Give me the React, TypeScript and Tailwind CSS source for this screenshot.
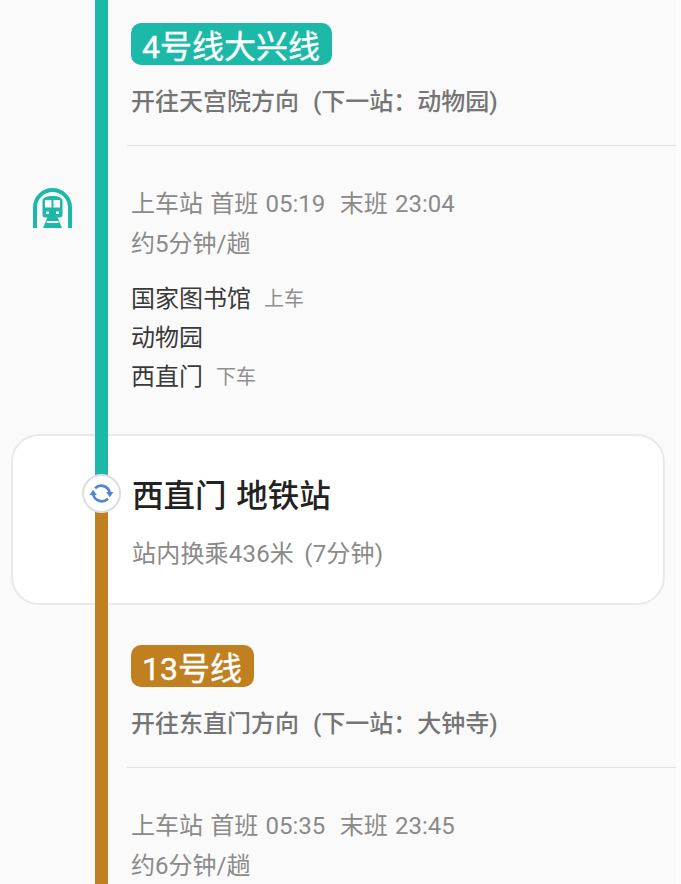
import React from 'react';

const TEAL = 'bg-[#1cb9a8]';
const BROWN = 'bg-[#c1801f]';

const MetroIcon = () => (
  <svg width="39" height="40" viewBox="0 0 39 40" fill="none">
    <path d="M2 40V19.500a17.500 17.500 0 0 1 35 0V40" stroke="#1cb9a8" strokeWidth="4" />
    <path d="M9.500 13c0-3.500 4-5 10-5s10 1.500 10 5v14c0 1.500-1 2.500-2.500 2.500H12c-1.500 0-2.500-1-2.500-2.500z" fill="#1cb9a8" />
    <rect x="12" y="12" width="6.500" height="7.500" fill="#fff" />
    <rect x="20.500" y="12" width="6.500" height="7.500" fill="#fff" />
    <rect x="13" y="23.500" width="3" height="2.500" fill="#fff" />
    <rect x="23" y="23.500" width="3" height="2.500" fill="#fff" />
    <path d="M14.500 29h10L29 40H10z" fill="#1cb9a8" />
    <rect x="13.500" y="33" width="12" height="2" fill="#fff" />
  </svg>
);

const TransferIcon = () => (
  <svg width="25" height="25" viewBox="0 0 24 24" fill="none">
    <path d="M5.800 7A8.500 8.500 0 0 1 20 11" stroke="#4f86d9" strokeWidth="2.600" />
    <path d="M16.500 10.500h7l-3.500 5z" fill="#4f86d9" />
    <path d="M18.200 17A8.500 8.500 0 0 1 4 13" stroke="#4f86d9" strokeWidth="2.600" />
    <path d="M.5 13.500h7L4 8.500z" fill="#4f86d9" />
  </svg>
);

const Header = ({ name, badge, direction }: { name: string; badge: string; direction: string }) => (
  <>
    <div className="flex">
      <span className={`${badge} h-[42px] rounded-[10px] pr-[12px] pl-[11px] text-[32px] leading-[48px] text-white [-webkit-text-stroke:0.4px_white]`}>{name}</span>
    </div>
    <p className="mt-[23px] text-[24px] leading-[28px] font-medium text-[#757575] [word-spacing:8px]">{direction}</p>
    <div className="mt-[29px] ml-[-4px] h-px bg-[#e2e2e2]" />
  </>
);

const Schedule = ({ first, last, wait }: { first: string; last: string; wait: string }) => (
  <div className="text-[24px] text-[#8a8a8a]">
    <p className="mt-[44px] leading-[28px] whitespace-pre [word-spacing:1.3px]">{`上车站 首班 ${first}  末班 ${last}`}</p>
    <p className="mt-[12px] leading-[28px]">{wait}</p>
  </div>
);

const Stop = ({ name, tag }: { name: string; tag?: string }) => (
  <div className="flex h-[39px] items-center gap-[13px]">
    <span className="text-[24px] text-[#3a3a3a]">{name}</span>
    {tag && <span className="text-[20px] text-[#8f8f8f]">{tag}</span>}
  </div>
);

export default function App() {
  return (
    <div
      className="h-[884px] overflow-hidden bg-[#fdfdfd]"
      style={{ fontFamily: 'Roboto, "Noto Sans CJK SC", sans-serif' }}
    >
      <div className="h-full w-[676px] bg-[#fafafa]">
        {/* 第一段 */}
        <section className="flex h-[434px]">
          <div className="flex w-[95px] shrink-0 justify-center pt-[188px] pl-[9px]">
            <div className="h-[40px]"><MetroIcon /></div>
          </div>
          <div className={`w-[13px] shrink-0 ${TEAL}`} />
          <div className="ml-[23px] flex-1 pt-[23px]">
            <Header name="4号线大兴线" badge={TEAL} direction="开往天宫院方向 (下一站：动物园)" />
            <Schedule first="05:19" last="23:04" wait="约5分钟/趟" />
            <div className="mt-[21px]">
              <Stop name="国家图书馆" tag="上车" />
              <Stop name="动物园" />
              <Stop name="西直门" tag="下车" />
            </div>
          </div>
        </section>

        {/* 换乘站 */}
        <section className="relative mr-[11px] ml-[11px] h-[171px] rounded-[28px] border-2 border-[#e9e9e9] bg-white pt-[39px] pl-[119px]">
          <div className={`absolute top-[-2px] left-[82px] h-[44px] w-[13px] ${TEAL}`} />
          <div className={`absolute bottom-[-2px] left-[82px] h-[93px] w-[13px] ${BROWN}`} />
          <div className="absolute top-[38px] left-[69px] flex h-[39px] w-[39px] items-center justify-center rounded-full border-2 border-[#dedede] bg-white">
            <TransferIcon />
          </div>
          <h2 className="text-[31.500px] leading-[44px] font-medium text-[#222222] [word-spacing:2px]">西直门 地铁站</h2>
          <p className="mt-[21px] text-[24px] leading-[28px] tracking-[0.2px] text-[#8a8a8a] [word-spacing:4px]">站内换乘436米 (7分钟)</p>
        </section>

        {/* 第二段 */}
        <section className="flex h-[279px]">
          <div className="w-[95px] shrink-0" />
          <div className={`w-[13px] shrink-0 ${BROWN}`} />
          <div className="ml-[23px] flex-1 pt-[40px]">
            <Header name="13号线" badge={BROWN} direction="开往东直门方向 (下一站：大钟寺)" />
            <Schedule first="05:35" last="23:45" wait="约6分钟/趟" />
          </div>
        </section>
      </div>
    </div>
  );
}
